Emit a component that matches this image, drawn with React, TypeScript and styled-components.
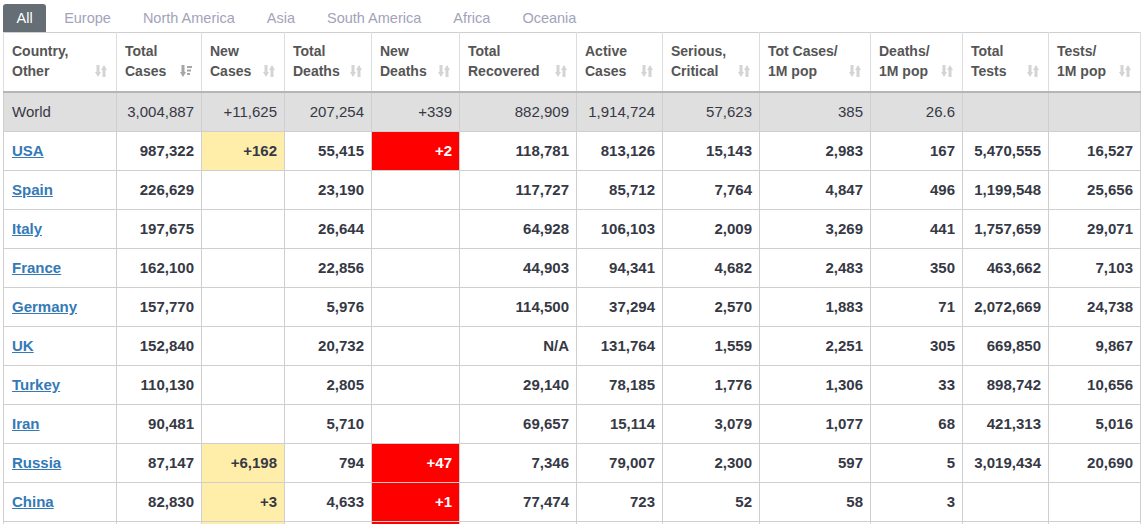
import React from "react";
import styled, { createGlobalStyle } from "styled-components";

const Global = createGlobalStyle`
  html, body { margin: 0; padding: 0; background: #fff; }
  body { font-family: "Liberation Sans", Arial, Helvetica, sans-serif; overflow: hidden; height: 524px; }
`;

const Page = styled.div`
  padding: 4px 0 0 3px;
  width: 1138px;
`;

const Tabs = styled.ul`
  display: flex;
  list-style: none;
  margin: 0;
  padding: 0;
  height: 28px;
`;

const Tab = styled.li<{ $active?: boolean }>`
  display: flex;
  align-items: center;
  height: 28px;
  padding: 0 ${(p) => (p.$active ? "13.5px" : "16px")};
  margin-right: ${(p) => (p.$active ? "2px" : "0")};
  font-size: 14.5px;
  color: ${(p) => (p.$active ? "#fff" : "#a3a3ba")};
  background: ${(p) => (p.$active ? "#666e75" : "transparent")};
  border-radius: 3px 3px 0 0;
  cursor: pointer;
`;

const Table = styled.table`
  border-collapse: collapse;
  table-layout: fixed;
  width: 1138px;
  border: 1px solid #cfcfcf;
`;

const Th = styled.th`
  text-align: left;
  vertical-align: bottom;
  padding: 8px 8px 10px 8px;
  font-size: 14px;
  line-height: 20px;
  font-weight: bold;
  color: #555;
  border-left: 1px solid #ddd;
  border-right: 1px solid #ddd;
  border-bottom: 2px solid #b5b5b5;
`;

const ThInner = styled.div`
  display: flex;
  align-items: flex-end;
  justify-content: space-between;
`;

const Label = styled.span`
  display: block;
`;

const IconBox = styled.span<{ $active?: boolean }>`
  display: flex;
  height: 20px;
  align-items: center;
  color: ${(p) => (p.$active ? "#a6a6a6" : "#d4d4d4")};
  flex-shrink: 0;
  margin-right: 1px;
`;

const Row = styled.tr<{ $world?: boolean }>`
  background: ${(p) => (p.$world ? "#dfdfdf" : "#fff")};
`;

const Td = styled.td<{ $world?: boolean; $tone?: "yellow" | "red"; $left?: boolean }>`
  padding: 9px 7px 9px 8px;
  line-height: 20px;
  font-size: 15px;
  font-weight: ${(p) => (p.$world ? "normal" : "bold")};
  text-align: ${(p) => (p.$left ? "left" : "right")};
  color: ${(p) => (p.$tone === "red" ? "#fff" : "#363945")};
  background: ${(p) =>
    p.$tone === "red" ? "#ff0000" : p.$tone === "yellow" ? "#ffeeaa" : "transparent"};
  border: 1px solid #cfcfcf;
  white-space: nowrap;
  overflow: hidden;
`;

const CountryLink = styled.a`
  color: #337ab7;
  text-decoration: underline;
  font-weight: bold;
`;

const SortIcon = ({ active }: { active?: boolean }) => (
  <IconBox $active={active}>
    <svg width="12" height="14" viewBox="0 0 12 14" fill="currentColor">
      <rect x="1.5" y="1" width="3" height="8" />
      <polygon points="0,8 6,8 3,13" />
      {active ? (
        <>
          <rect x="7" y="2" width="5" height="2" />
          <rect x="7" y="5.5" width="4" height="2" />
          <rect x="7" y="9" width="3" height="2" />
        </>
      ) : (
        <>
          <polygon points="6,6 12,6 9,1" />
          <rect x="7.5" y="5" width="3" height="8" />
        </>
      )}
    </svg>
  </IconBox>
);

const widths = [113, 85, 83, 87, 88, 117, 86, 97, 111, 92, 86, 92];

const headers: [string, string][] = [
  ["Country,", "Other"],
  ["Total", "Cases"],
  ["New", "Cases"],
  ["Total", "Deaths"],
  ["New", "Deaths"],
  ["Total", "Recovered"],
  ["Active", "Cases"],
  ["Serious,", "Critical"],
  ["Tot Cases/", "1M pop"],
  ["Deaths/", "1M pop"],
  ["Total", "Tests"],
  ["Tests/", "1M pop"],
];

type RowData = string[];

const world: RowData = [
  "World", "3,004,887", "+11,625", "207,254", "+339", "882,909", "1,914,724", "57,623", "385", "26.6", "", "",
];

const rows: RowData[] = [
  ["USA", "987,322", "+162", "55,415", "+2", "118,781", "813,126", "15,143", "2,983", "167", "5,470,555", "16,527"],
  ["Spain", "226,629", "", "23,190", "", "117,727", "85,712", "7,764", "4,847", "496", "1,199,548", "25,656"],
  ["Italy", "197,675", "", "26,644", "", "64,928", "106,103", "2,009", "3,269", "441", "1,757,659", "29,071"],
  ["France", "162,100", "", "22,856", "", "44,903", "94,341", "4,682", "2,483", "350", "463,662", "7,103"],
  ["Germany", "157,770", "", "5,976", "", "114,500", "37,294", "2,570", "1,883", "71", "2,072,669", "24,738"],
  ["UK", "152,840", "", "20,732", "", "N/A", "131,764", "1,559", "2,251", "305", "669,850", "9,867"],
  ["Turkey", "110,130", "", "2,805", "", "29,140", "78,185", "1,776", "1,306", "33", "898,742", "10,656"],
  ["Iran", "90,481", "", "5,710", "", "69,657", "15,114", "3,079", "1,077", "68", "421,313", "5,016"],
  ["Russia", "87,147", "+6,198", "794", "+47", "7,346", "79,007", "2,300", "597", "5", "3,019,434", "20,690"],
  ["China", "82,830", "+3", "4,633", "+1", "77,474", "723", "52", "58", "3", "", ""],
  ["Brazil", "63,100", "+4,613", "4,286", "+338", "30,152", "28,662", "8,318", "297", "20", "291,922", "1,373"],
];

const tabs = ["All", "Europe", "North America", "Asia", "South America", "Africa", "Oceania"];

const toneFor = (i: number, v: string): "yellow" | "red" | undefined => {
  if (!v) return undefined;
  if (i === 2) return "yellow";
  if (i === 4) return "red";
  return undefined;
};

export default function App() {
  return (
    <>
      <Global />
      <Page>
        <Tabs>
          {tabs.map((t, i) => (
            <Tab key={t} $active={i === 0}>
              {t}
            </Tab>
          ))}
        </Tabs>
        <Table>
          <colgroup>
            {widths.map((w, i) => (
              <col key={i} style={{ width: w }} />
            ))}
          </colgroup>
          <thead>
            <tr>
              {headers.map(([a, b], i) => (
                <Th key={i}>
                  <ThInner>
                    <Label>
                      {a}
                      <br />
                      {b}
                    </Label>
                    <SortIcon active={i === 1} />
                  </ThInner>
                </Th>
              ))}
            </tr>
          </thead>
          <tbody>
            <Row $world>
              {world.map((v, i) => (
                <Td key={i} $world $left={i === 0}>
                  {v}
                </Td>
              ))}
            </Row>
            {rows.map((r) => (
              <Row key={r[0]}>
                {r.map((v, i) => (
                  <Td key={i} $left={i === 0} $tone={toneFor(i, v)}>
                    {i === 0 ? <CountryLink href="#">{v}</CountryLink> : v}
                  </Td>
                ))}
              </Row>
            ))}
          </tbody>
        </Table>
      </Page>
    </>
  );
}
